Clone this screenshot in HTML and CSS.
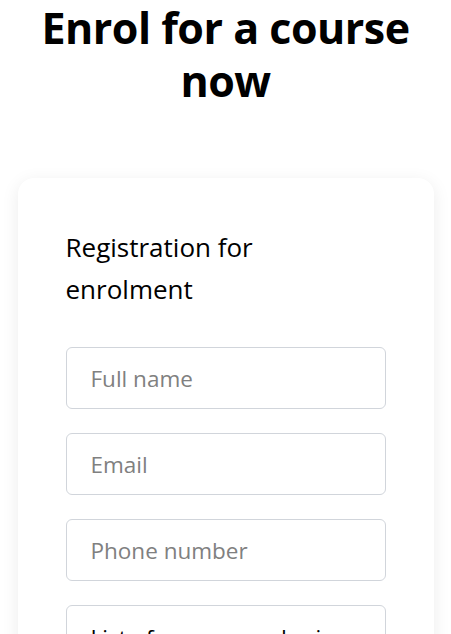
FILE: index.html
```html
<!DOCTYPE html>
<html lang="en">
<head>
<meta charset="utf-8">
<title>Enrol for a course now</title>
<link rel="stylesheet" href="styles.css">
</head>
<body>
<main class="page">
  <h1 class="page-title">Enrol for a course now</h1>
  <section class="card">
    <h2 class="card-title">Registration for enrolment</h2>
    <form class="form">
      <input class="field" type="text" placeholder="Full name">
      <input class="field" type="email" placeholder="Email">
      <input class="field" type="tel" placeholder="Phone number">
      <div class="field field-select">List of courses and prices</div>
    </form>
  </section>
</main>
</body>
</html>
```
FILE: styles.css
```css
* { box-sizing: border-box; }
html, body { margin: 0; padding: 0; background: #fff; }
body {
  font-family: "Open Sans", "Noto Sans", sans-serif;
  color: #000;
}
.page {
  padding: 0 17.5px;
}
.page-title {
  margin: 0;
  padding-top: 1px;
  text-align: center;
  font-size: 43px;
  line-height: 53px;
  font-weight: 700;
  letter-spacing: -0.5px;
}
.card {
  margin-top: 71px;
  background: #fff;
  border-radius: 16px;
  box-shadow: 0 4px 18px rgba(0,0,0,0.08);
  padding: 48px;
}
.card-title {
  margin: 0 0 37px;
  max-width: 240px;
  font-size: 26px;
  line-height: 42px;
  font-weight: 500;
}
.form {
  display: flex;
  flex-direction: column;
  gap: 24px;
}
.field {
  display: block;
  width: 100%;
  height: 62px;
  border: 1px solid #d1d5db;
  border-radius: 6px;
  padding: 0 24px;
  font-family: inherit;
  font-size: 22.5px;
  color: #000;
  background: #fff;
  outline: none;
}
.field::placeholder { color: #808080; }
.field-select {
  display: flex;
  align-items: center;
  padding-top: 3px;
}
```
